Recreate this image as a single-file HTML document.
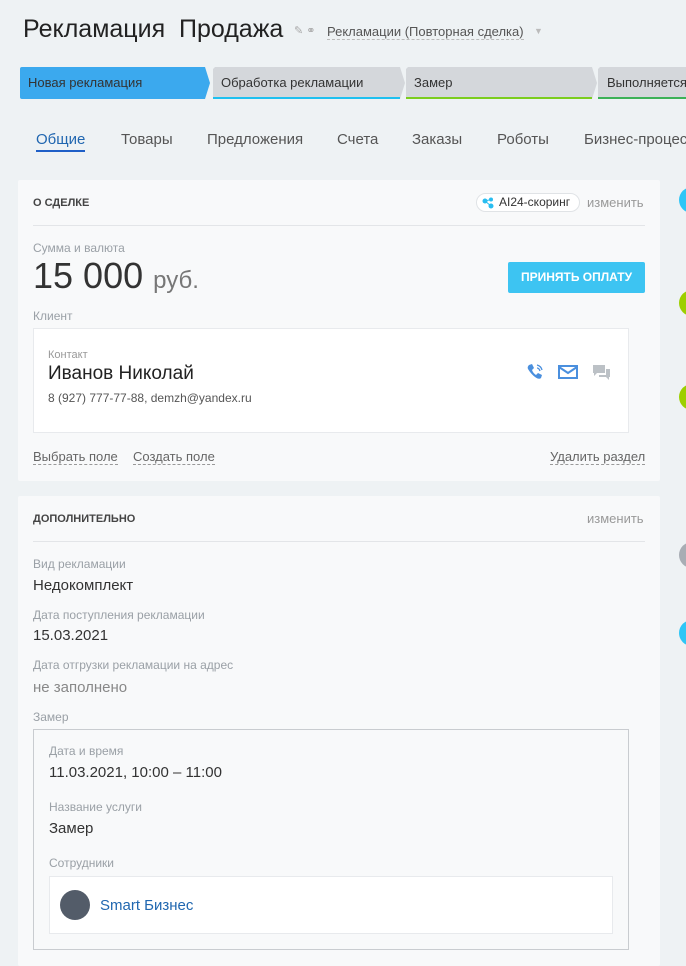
<!DOCTYPE html>
<html><head><meta charset="utf-8"><style>
*{margin:0;padding:0;box-sizing:border-box}
body{width:686px;height:957px;overflow:hidden;background:#eef2f4;font-family:"Liberation Sans",sans-serif;position:relative;color:#333}
.a{position:absolute;white-space:nowrap}
.lbl{font-size:12px;color:#9aa0a6}
.val{font-size:15px;color:#333}
.stage{position:absolute;top:67px;height:32px;font-size:13px;color:#333;line-height:32px;padding-left:10px;white-space:nowrap}
.tab{position:absolute;top:131px;font-size:15px;color:#555;white-space:nowrap}
.dash{border-bottom:1px dashed #999;font-size:13px;color:#666}
</style></head><body>
<div class="a" style="left:23px;top:15px;font-size:25px;color:#222;font-weight:300">Рекламация&nbsp; Продажа</div>
<div class="a" style="left:294px;top:24px;font-size:11px;color:#aaa">✎ ⚭</div>
<div class="a" style="left:327px;top:24px;font-size:13px;color:#555;border-bottom:1px dashed #bbb;line-height:15px">Рекламации (Повторная сделка)</div>
<div class="a" style="left:534px;top:26px;font-size:9px;color:#bbb">▼</div>

<svg class="a" style="left:0;top:67px" width="686" height="33">
<path d="M22 0H205L210 16L205 32H22Q20 32 20 30V2Q20 0 22 0Z" fill="#3ba9ee"/>
<path d="M215 0H400L405 16L400 32H213V2Z" fill="#d4d7db"/>
<rect x="213" y="30" width="187" height="2" fill="#1ec0f0"/>
<path d="M408 0H592L597 16L592 32H406V2Z" fill="#d4d7db"/>
<rect x="406" y="30" width="186" height="2" fill="#7ccd1e"/>
<path d="M600 0H686V32H598V2Z" fill="#d4d7db"/>
<rect x="598" y="30" width="88" height="2" fill="#3cb157"/>
</svg>
<div class="stage" style="left:18px">Новая рекламация</div>
<div class="stage" style="left:211px">Обработка рекламации</div>
<div class="stage" style="left:404px">Замер</div>
<div class="stage" style="left:597px">Выполняется</div>

<div class="tab" style="left:36px;color:#2066b0">Общие</div>
<div class="a" style="left:36px;top:150px;width:49px;height:2px;background:#1f5fc7"></div>
<div class="tab" style="left:121px">Товары</div>
<div class="tab" style="left:207px">Предложения</div>
<div class="tab" style="left:337px">Счета</div>
<div class="tab" style="left:412px">Заказы</div>
<div class="tab" style="left:497px">Роботы</div>
<div class="tab" style="left:584px">Бизнес-процессы</div>

<!-- card 1 -->
<div class="a" style="left:18px;top:180px;width:642px;height:301px;background:#f8f9fa;border-radius:2px"></div>
<div class="a" style="left:33px;top:197px;font-size:11px;font-weight:bold;color:#444">О СДЕЛКЕ</div>
<div class="a" style="left:476px;top:193px;width:104px;height:19px;border:1px solid #e0e3e6;border-radius:10px;background:#fff;font-size:12px;line-height:17px;padding-left:22px;color:#333">AI24-скоринг</div>
<svg class="a" style="left:482px;top:197px" width="12" height="12"><circle cx="3" cy="4" r="2.5" fill="#29bdf0"/><circle cx="9" cy="2.5" r="2" fill="#29bdf0"/><circle cx="9" cy="9" r="2.5" fill="#29bdf0"/><path d="M3 4L9 9M3 4L9 2.5" stroke="#29bdf0"/></svg>
<div class="a" style="left:587px;top:195px;font-size:13px;color:#999">изменить</div>
<div class="a" style="left:33px;top:225px;width:612px;height:1px;background:#e3e5e8"></div>
<div class="a lbl" style="left:33px;top:241px">Сумма и валюта</div>
<div class="a" style="left:33px;top:255px;font-size:36px;color:#333;font-weight:300">15 000 <span style="font-size:24px;color:#777">руб.</span></div>
<div class="a" style="left:508px;top:262px;width:137px;height:31px;background:#3dc4f2;border-radius:2px;color:#fff;font-size:12px;font-weight:bold;line-height:31px;text-align:center">ПРИНЯТЬ ОПЛАТУ</div>
<div class="a lbl" style="left:33px;top:309px">Клиент</div>
<div class="a" style="left:33px;top:328px;width:596px;height:105px;background:#fff;border:1px solid #e8eaed"></div>
<div class="a" style="left:48px;top:349px;font-size:11px;color:#999">Контакт</div>
<div class="a" style="left:48px;top:363px;font-size:19px;color:#222">Иванов Николай</div>
<div class="a" style="left:48px;top:391px;font-size:12px;color:#555">8 (927) 777-77-88, demzh@yandex.ru</div>
<svg class="a" style="left:525px;top:362px" width="90" height="22">
<path d="M4 3l3-1 2 4-2 2q1 3 4 5l2-2 4 2-1 3q-2 2-6-1t-7-8q-1-2 1-4z" fill="#4a8fde"/>
<path d="M12 3q4 1 5 5M12 6q2 0 3 3" stroke="#4a8fde" fill="none" stroke-width="1.3"/>
<rect x="34" y="4" width="18" height="12" fill="none" stroke="#4a8fde" stroke-width="2"/>
<path d="M34 5l9 6 9-6" stroke="#4a8fde" fill="none" stroke-width="2"/>
<path d="M68 3h12v8h-8l-3 3v-3h-1z" fill="#bcc1c6"/><path d="M81 7h4v8h-1v3l-3-3h-7v-2h7z" fill="#bcc1c6"/>
</svg>
<div class="a dash" style="left:33px;top:449px">Выбрать поле</div>
<div class="a dash" style="left:133px;top:449px">Создать поле</div>
<div class="a dash" style="left:550px;top:449px">Удалить раздел</div>

<!-- card 2 -->
<div class="a" style="left:18px;top:496px;width:642px;height:470px;background:#f8f9fa;border-radius:2px"></div>
<div class="a" style="left:33px;top:513px;font-size:11px;font-weight:bold;color:#444">ДОПОЛНИТЕЛЬНО</div>
<div class="a" style="left:587px;top:511px;font-size:13px;color:#999">изменить</div>
<div class="a" style="left:33px;top:541px;width:612px;height:1px;background:#e3e5e8"></div>
<div class="a lbl" style="left:33px;top:557px">Вид рекламации</div>
<div class="a val" style="left:33px;top:577px">Недокомплект</div>
<div class="a lbl" style="left:33px;top:608px">Дата поступления рекламации</div>
<div class="a val" style="left:33px;top:627px">15.03.2021</div>
<div class="a lbl" style="left:33px;top:658px">Дата отгрузки рекламации на адрес</div>
<div class="a val" style="left:33px;top:679px;color:#888">не заполнено</div>
<div class="a lbl" style="left:33px;top:710px">Замер</div>
<div class="a" style="left:33px;top:729px;width:596px;height:221px;border:1px solid #c9ccd0"></div>
<div class="a lbl" style="left:49px;top:744px">Дата и время</div>
<div class="a val" style="left:49px;top:764px">11.03.2021, 10:00 – 11:00</div>
<div class="a lbl" style="left:49px;top:800px">Название услуги</div>
<div class="a val" style="left:49px;top:820px">Замер</div>
<div class="a lbl" style="left:49px;top:856px">Сотрудники</div>
<div class="a" style="left:49px;top:876px;width:564px;height:58px;background:#fff;border:1px solid #e8eaed"></div>
<div class="a" style="left:60px;top:890px;width:30px;height:30px;border-radius:50%;background:#535c69"></div>
<div class="a" style="left:100px;top:897px;font-size:15px;color:#2067b0">Smart Бизнес</div>

<!-- right circles -->
<div class="a" style="left:679px;top:187px;width:26px;height:26px;border-radius:50%;background:#2fc6f6"></div>
<div class="a" style="left:679px;top:290px;width:26px;height:26px;border-radius:50%;background:#9dcf00"></div>
<div class="a" style="left:679px;top:384px;width:26px;height:26px;border-radius:50%;background:#9dcf00"></div>
<div class="a" style="left:679px;top:542px;width:26px;height:26px;border-radius:50%;background:#a8adb4"></div>
<div class="a" style="left:679px;top:620px;width:26px;height:26px;border-radius:50%;background:#2fc6f6"></div>
</body></html>
